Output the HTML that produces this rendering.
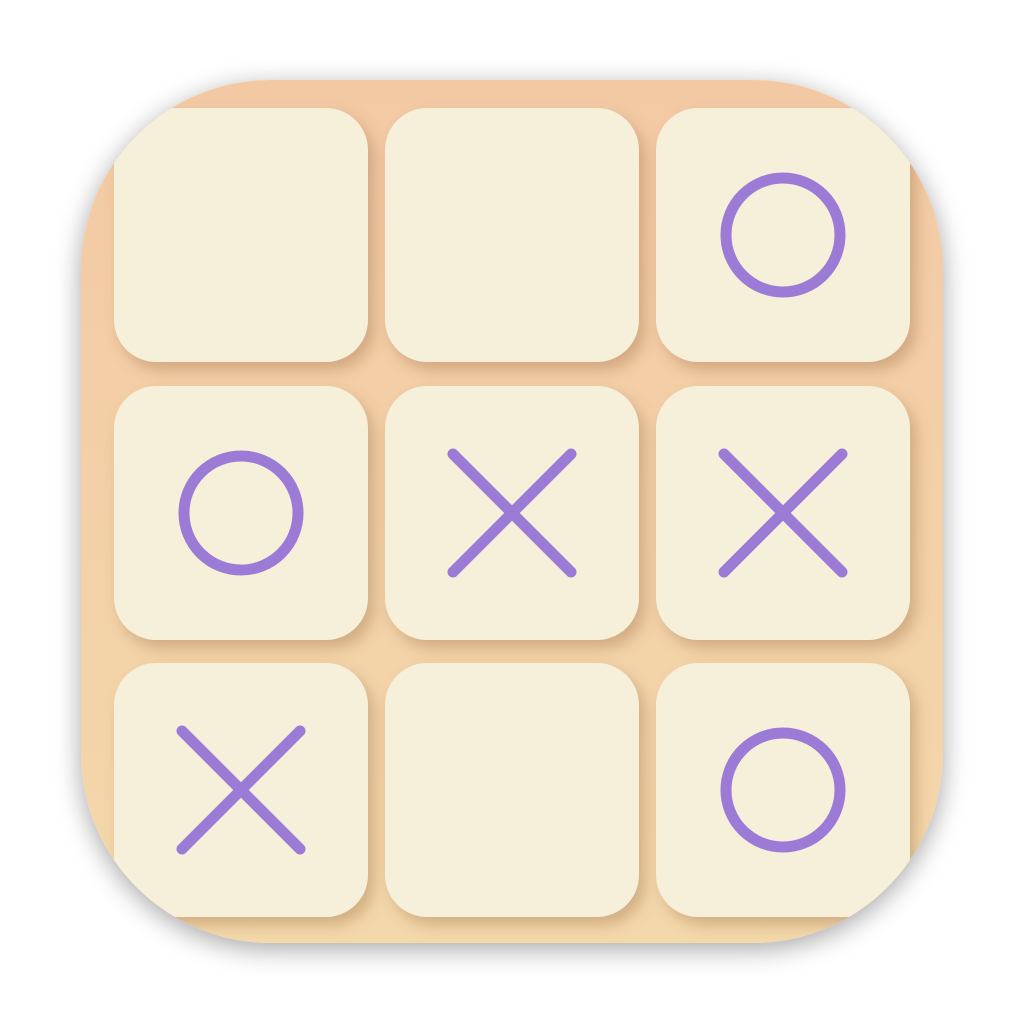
<!DOCTYPE html><html><head><style>
html,body{margin:0;width:1024px;height:1024px;background:#fff;overflow:hidden}
.icon{position:absolute;left:81px;top:80px;width:862px;height:863px;border-radius:190px;overflow:hidden;
background:linear-gradient(180deg,#f3c9a4,#f3d8aa);box-shadow:0 6px 26px rgba(0,0,0,.35)}
.t{position:absolute;width:254px;height:254px;border-radius:42px;background:#f6efda;box-shadow:6px 8px 14px rgba(150,100,60,.35)}
svg{position:absolute;left:0;top:0}
</style></head><body>
<div class="icon">
<div class="t" style="left:33px;top:28px"></div>
<div class="t" style="left:304px;top:28px"></div>
<div class="t" style="left:575px;top:28px"></div>
<div class="t" style="left:33px;top:306px"></div>
<div class="t" style="left:304px;top:306px"></div>
<div class="t" style="left:575px;top:306px"></div>
<div class="t" style="left:33px;top:583px"></div>
<div class="t" style="left:304px;top:583px"></div>
<div class="t" style="left:575px;top:583px"></div>
</div>
<svg width="1024" height="1024" fill="none" stroke="#9b7bd6" stroke-width="11" stroke-linecap="round">
<circle cx="783" cy="235" r="57"/>
<circle cx="241" cy="513" r="57"/>
<circle cx="783" cy="790" r="57"/>
<path d="M453 454L571 572M571 454L453 572"/>
<path d="M724 454L842 572M842 454L724 572"/>
<path d="M182 731L300 849M300 731L182 849"/>
</svg>
</body></html>
